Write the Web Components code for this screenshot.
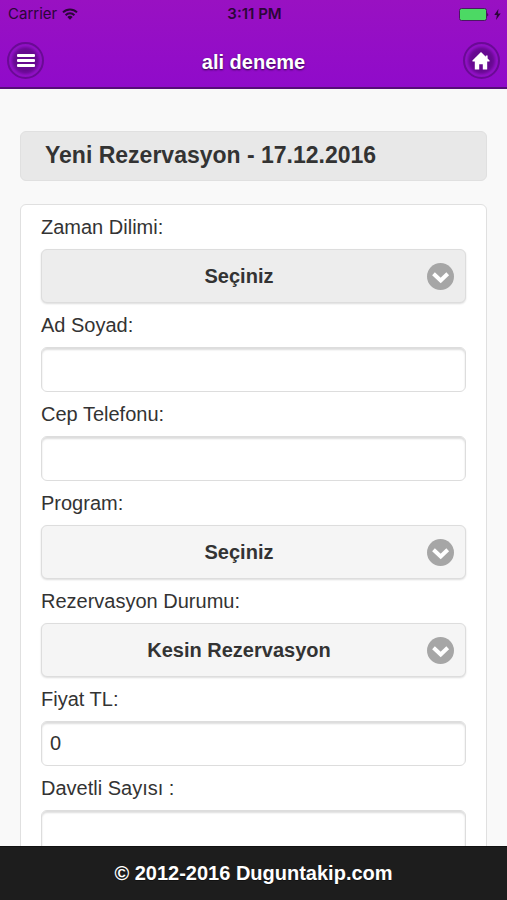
<!DOCTYPE html>
<html lang="tr">
<head>
<meta charset="utf-8">
<meta name="viewport" content="width=device-width, initial-scale=1">
<title>Yeni Rezervasyon</title>
<style>
html, body { margin: 0; height: 100%; }
body { font-family: "Liberation Sans", Arial, sans-serif; color: #333; background: #f9f9f9; overflow: hidden; }
</style>
</head>
<body>
<app-shell>
  <status-bar slot="top"></status-bar>
  <app-header slot="top">ali deneme</app-header>
  <page-title>Yeni Rezervasyon - 17.12.2016</page-title>
  <form-card>
    <select-field label="Zaman Dilimi:" value="Seçiniz" active></select-field>
    <text-field label="Ad Soyad:"></text-field>
    <text-field label="Cep Telefonu:"></text-field>
    <select-field label="Program:" value="Seçiniz"></select-field>
    <select-field label="Rezervasyon Durumu:" value="Kesin Rezervasyon"></select-field>
    <text-field label="Fiyat TL:" value="0"></text-field>
    <text-field label="Davetli Sayısı :"></text-field>
  </form-card>
  <app-footer slot="bottom">© 2012-2016 Duguntakip.com</app-footer>
</app-shell>
<script>
function define(name, render) {
  customElements.define(name, class extends HTMLElement {
    constructor() {
      super();
      this.attachShadow({ mode: 'open' }).innerHTML = render(this);
    }
  });
}

define('app-shell', () => `
  <style>
    :host { display: flex; flex-direction: column; height: 100vh; }
    header { background: linear-gradient(#9911c2, #900bca); border-bottom: 2px solid #560d78; flex: none; }
    main { flex: 1; min-height: 0; overflow: hidden; padding: 42px 20px 0; }
  </style>
  <header><slot name="top"></slot></header>
  <main><slot></slot></main>
  <slot name="bottom"></slot>`);

define('status-bar', () => `
  <style>
    :host { display: grid; grid-template-columns: 1fr auto 1fr; align-items: center; height: 28px; padding: 0 6px 0 8px;
      font: 15px/28px Inter, sans-serif; color: #2b0638; }
    .left, .right { display: flex; align-items: center; gap: 5px; }
    .right { justify-content: flex-end; gap: 5px; }
    .time { font-weight: 600; }
    svg { display: block; }
  </style>
  <span class="left">Carrier
    <svg width="16" height="12" viewBox="0 0 16 12" fill="none" stroke="currentColor" stroke-width="2">
      <path d="M1 4.4a10 10 0 0 1 14 0M3.6 7.2a6.2 6.2 0 0 1 8.8 0"/>
      <path d="M8 11.8 5.3 9a3.8 3.8 0 0 1 5.4 0z" fill="currentColor" stroke="none"/>
    </svg>
  </span>
  <span class="time">3:11 PM</span>
  <span class="right">
    <svg width="30" height="13" viewBox="0 0 30 13">
      <rect x=".5" y=".5" width="27" height="12" rx="2" fill="#4cd964" stroke="#4b1763"/>
      <path d="M28.3 4.5q1.7 2 0 4z" fill="#2b0638"/>
    </svg>
    <svg width="7" height="11" viewBox="0 0 7 11"><path d="M4.4 0 .3 6h2.6L2 11l4.7-6.4H4z" fill="#2b0638"/></svg>
  </span>`);

define('app-header', () => `
  <style>
    :host { display: flex; align-items: flex-start; justify-content: space-between; height: 59px; padding: 14px 7px 0; box-sizing: border-box; }
    h1 { margin: 0; font-size: 20px; line-height: 40px; font-weight: bold; color: #fff; text-shadow: 0 1px 2px #2c0540; }
    button { display: grid; place-items: center; width: 37px; height: 37px; padding: 0; margin: 0; box-sizing: border-box;
      border: 2px solid #6a0a95; border-radius: 50%; color: #fff;
      background: radial-gradient(circle, #660990 0 10px, #6f0a9b 12px, #8f10c3 15px); }
    svg { display: block; }
  </style>
  <button type="button" aria-label="Menü">
    <svg width="18" height="14" viewBox="0 0 18 14" fill="#fff">
      <rect y="0" width="18" height="3" rx="1"/><rect y="5" width="18" height="3" rx="1"/><rect y="10" width="18" height="3" rx="1"/>
    </svg>
  </button>
  <h1><slot></slot></h1>
  <button type="button" aria-label="Ana sayfa">
    <svg width="18" height="18" viewBox="0 0 18 18" fill="#fff"><path d="M9 0 .4 8.4Q.2 9.6 1.2 9.6H2.8V17.6H7.2V12.2H10.8V17.6H15.2V9.6H16.8Q17.8 9.6 17.6 8.4L15.6 6.4V3.6H13.8V4.7Z"/></svg>
  </button>`);

define('page-title', () => `
  <style>
    :host { display: block; background: #e8e8e8; border: 1px solid #e0e0e0; border-radius: 6px; padding: 9px 24px 11px; margin-bottom: 23px; }
    h2 { margin: 0; font-size: 23px; line-height: 28px; font-weight: bold; }
  </style>
  <h2><slot></slot></h2>`);

define('form-card', () => `
  <style>
    :host { display: block; background: #fff; border: 1px solid #e0e0e0; border-radius: 6px; padding: 10px 20px 20px; }
    form { display: flex; flex-direction: column; gap: 10px; }
  </style>
  <form><slot></slot></form>`);

const fieldStyles = `
  :host { display: flex; flex-direction: column; gap: 10px; }
  label { font-size: 20px; line-height: 24px; }
  input, select { display: block; width: 100%; margin: 0; box-sizing: border-box; font-family: inherit; font-size: 20px;
    color: #333; border: 1px solid #ddd; border-radius: 6px; outline: none; }`;

define('text-field', el => `
  <style>${fieldStyles}
    input { height: 45px; padding: 0 8px; background: #fff; box-shadow: inset 0 2px 2px #ddd; }
  </style>
  <label for="control">${el.getAttribute('label')}</label>
  <input id="control" type="text" value="${el.getAttribute('value') || ''}">`);

define('select-field', el => `
  <style>${fieldStyles}
    .box { display: grid; align-items: center; }
    select { grid-area: 1 / 1; height: 54px; appearance: none; background: #f5f5f5; font-weight: bold;
      padding: 0 37px 0 8px; text-align: center; text-align-last: center; box-shadow: 0 1px 2px #ddd; }
    :host([active]) select { background: #ededed; }
    svg { grid-area: 1 / 1; justify-self: end; margin-right: 12px; pointer-events: none; z-index: 1; }
  </style>
  <label for="control">${el.getAttribute('label')}</label>
  <div class="box">
    <select id="control"><option>${el.getAttribute('value')}</option></select>
    <svg width="27" height="27" viewBox="0 0 27 27">
      <circle cx="13.5" cy="13.5" r="13.5" fill="#a6a6a6"/>
      <path d="M6.5 10.8 13.7 17.5 20.7 10.8" fill="none" stroke="#fff" stroke-width="4"/>
    </svg>
  </div>`);

define('app-footer', () => `
  <style>
    :host { display: block; flex: none; background: #1d1d1d; border-top: 1px solid #111; padding: 14px 0 15px; text-align: center;
      font-size: 20px; line-height: 24px; font-weight: bold; color: #fff; text-shadow: 0 1px 0 #111; }
  </style>
  <slot></slot>`);
</script>
</body>
</html>
